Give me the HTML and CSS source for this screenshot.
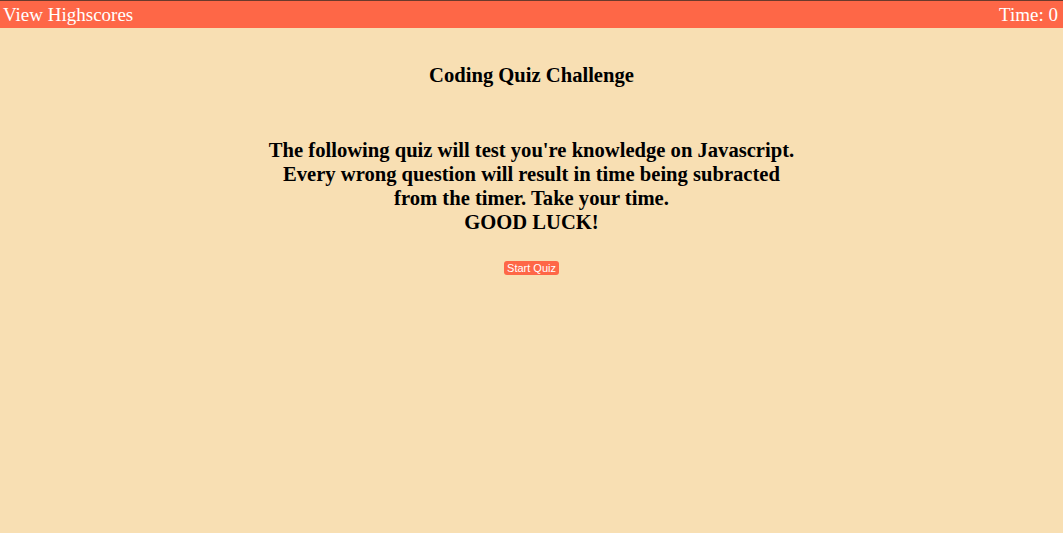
FILE: index.html
```html
<!DOCTYPE html>
<html>
<head>
<meta charset="utf-8">
<link rel="stylesheet" href="styles.css">
<title>Coding Quiz</title>
</head>
<body>
<header class="topbar">
  <a class="scores">View Highscores</a>
  <span class="timer">Time: 0</span>
</header>
<main class="quiz">
  <h1 class="title">Coding Quiz Challenge</h1>
  <p class="intro">The following quiz will test you're knowledge on Javascript.<br>Every wrong question will result in time being subracted<br>from the timer. Take your time.<br>GOOD LUCK!</p>
  <button class="start">Start Quiz</button>
</main>
</body>
</html>
```
FILE: styles.css
```css
html, body {
  margin: 0;
  padding: 0;
}
body {
  background: #f8dfb3;
  font-family: "Liberation Serif", "Times New Roman", serif;
  color: #000;
  min-height: 533px;
}
.topbar {
  display: flex;
  justify-content: space-between;
  align-items: center;
  background: #fe6747;
  border-top: 1px solid #6b3a2c;
  height: 27px;
  padding: 0 5px 0 3px;
  color: #fff;
  font-size: 19px;
}
.quiz {
  display: flex;
  flex-direction: column;
  align-items: center;
  text-align: center;
}
.title {
  font-size: 20.6px;
  font-weight: bold;
  margin: 35px 0 0;
  line-height: 24px;
}
.intro {
  font-size: 20.6px;
  font-weight: bold;
  line-height: 24px;
  margin: 51px 0 0;
}
.start {
  margin-top: 27px;
  background: #fe6747;
  color: #fff;
  border: none;
  border-radius: 3px;
  font-family: "Liberation Sans", Arial, sans-serif;
  font-size: 11px;
  padding: 1px 3px;
  line-height: 12px;
}
```
